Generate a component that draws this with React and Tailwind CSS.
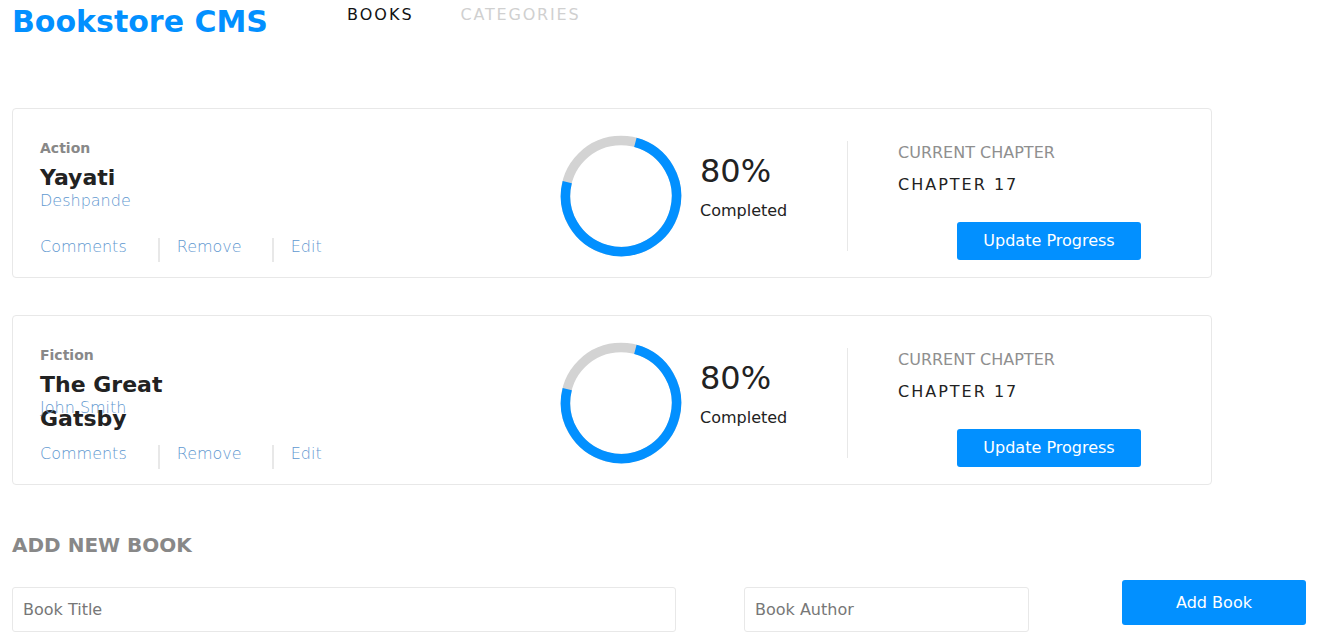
import React from 'react';

const books = [
  { id: 1, category: 'Action', title: 'Yayati', author: 'Deshpande', progress: 80, chapter: 'Chapter 17' },
  { id: 2, category: 'Fiction', title: 'The Great Gatsby', author: 'John Smith', progress: 80, chapter: 'Chapter 17' },
];

function ProgressRing() {
  const r = 55.5;
  const c = 2 * Math.PI * r;
  const arc = (269 / 360) * c;
  return (
    <svg width="122" height="122" viewBox="0 0 122 122" className="shrink-0 mt-[26px]">
      <circle cx="61" cy="61" r={r} fill="none" stroke="#d3d3d3" strokeWidth="9.5" />
      <circle
        cx="61"
        cy="61"
        r={r}
        fill="none"
        stroke="#0290ff"
        strokeWidth="9.5"
        strokeDasharray={`${arc} ${c}`}
        transform="rotate(-75 61 61)"
      />
    </svg>
  );
}

function BookCard({ book }) {
  return (
    <div className="flex items-start h-[170px] w-[1200px] border border-[#e8e8e8] rounded-[4px] bg-white">
      {/* info */}
      <div className="w-[547px] shrink-0 pl-[27px] pt-[29px]">
        <div className="text-[14px] leading-[20px] font-bold text-[#888]">{book.category}</div>
        <div className="mt-[3px] h-[30px] w-[180px] text-[22px] leading-[34px] font-bold text-[#222]">{book.title}</div>
        <div className="text-[16px] leading-[20px] font-light text-[#5f98d0]">{book.author}</div>
        <div className="mt-[26px] flex items-start text-[16px] leading-[20px] font-light text-[#5f98d0]">
          <button className="leading-[20px]">Comments</button>
          <div className="mt-[1px] ml-[31px] mr-[17px] h-[24px] w-[2px] bg-[#e8e8e8]" />
          <button className="leading-[20px]">Remove</button>
          <div className="mt-[1px] ml-[30px] mr-[17px] h-[24px] w-[2px] bg-[#e8e8e8]" />
          <button className="leading-[20px]">Edit</button>
        </div>
      </div>

      {/* progress */}
      <ProgressRing />
      <div className="ml-[18px] w-[147px] shrink-0 mt-[42px]">
        <div className="text-[32px] leading-[40px] text-[#222]">{book.progress}%</div>
        <div className="mt-[10px] text-[16px] leading-[20px] text-[#222]">Completed</div>
      </div>

      {/* chapter */}
      <div className="mt-[32px] h-[110px] w-px bg-[#e8e8e8]" />
      <div className="pl-[50px] mt-[34px]">
        <div className="text-[16px] leading-[20px] text-[#8f8f8f] uppercase">Current Chapter</div>
        <div className="mt-[12px] text-[16px] leading-[20px] tracking-[2px] text-[#222] uppercase">{book.chapter}</div>
        <button className="mt-[27px] ml-[59px] h-[38px] w-[184px] rounded-[3px] bg-[#0290ff] text-[16px] text-white">
          Update Progress
        </button>
      </div>
    </div>
  );
}

export default function App() {
  return (
    <div className="min-h-screen bg-white px-[12px] font-['DejaVu_Sans',sans-serif]">
      <header className="flex items-start h-[44px]">
        <div className="w-[335px] shrink-0 text-[30px] leading-[44px] font-bold text-[#0290ff]">Bookstore CMS</div>
        <nav className="flex items-start gap-[47px] text-[16px] leading-[29px] tracking-[2px]">
          <a className="text-[#121212]">BOOKS</a>
          <a className="text-[#d0d0d0] tracking-[1.8px]">CATEGORIES</a>
        </nav>
      </header>

      <main className="mt-[64px] flex flex-col gap-[37px]">
        {books.map((b) => (
          <BookCard key={b.id} book={b} />
        ))}
      </main>

      <section className="mt-[46px]">
        <h2 className="text-[20px] leading-[28px] font-bold text-[#888]">ADD NEW BOOK</h2>
        <form className="mt-[21px] flex items-start" onSubmit={(e) => e.preventDefault()}>
          <input
            placeholder="Book Title"
            className="mt-[7px] h-[45px] w-[664px] rounded-[3px] border border-[#e8e8e8] px-[10px] text-[16px] placeholder:text-[#777] outline-none"
          />
          <input
            placeholder="Book Author"
            className="ml-[68px] mt-[7px] h-[45px] w-[285px] rounded-[3px] border border-[#e8e8e8] px-[10px] text-[16px] placeholder:text-[#777] outline-none"
          />
          <button className="ml-[93px] h-[45px] w-[184px] rounded-[3px] bg-[#0290ff] text-[16px] text-white">
            Add Book
          </button>
        </form>
      </section>
    </div>
  );
}
